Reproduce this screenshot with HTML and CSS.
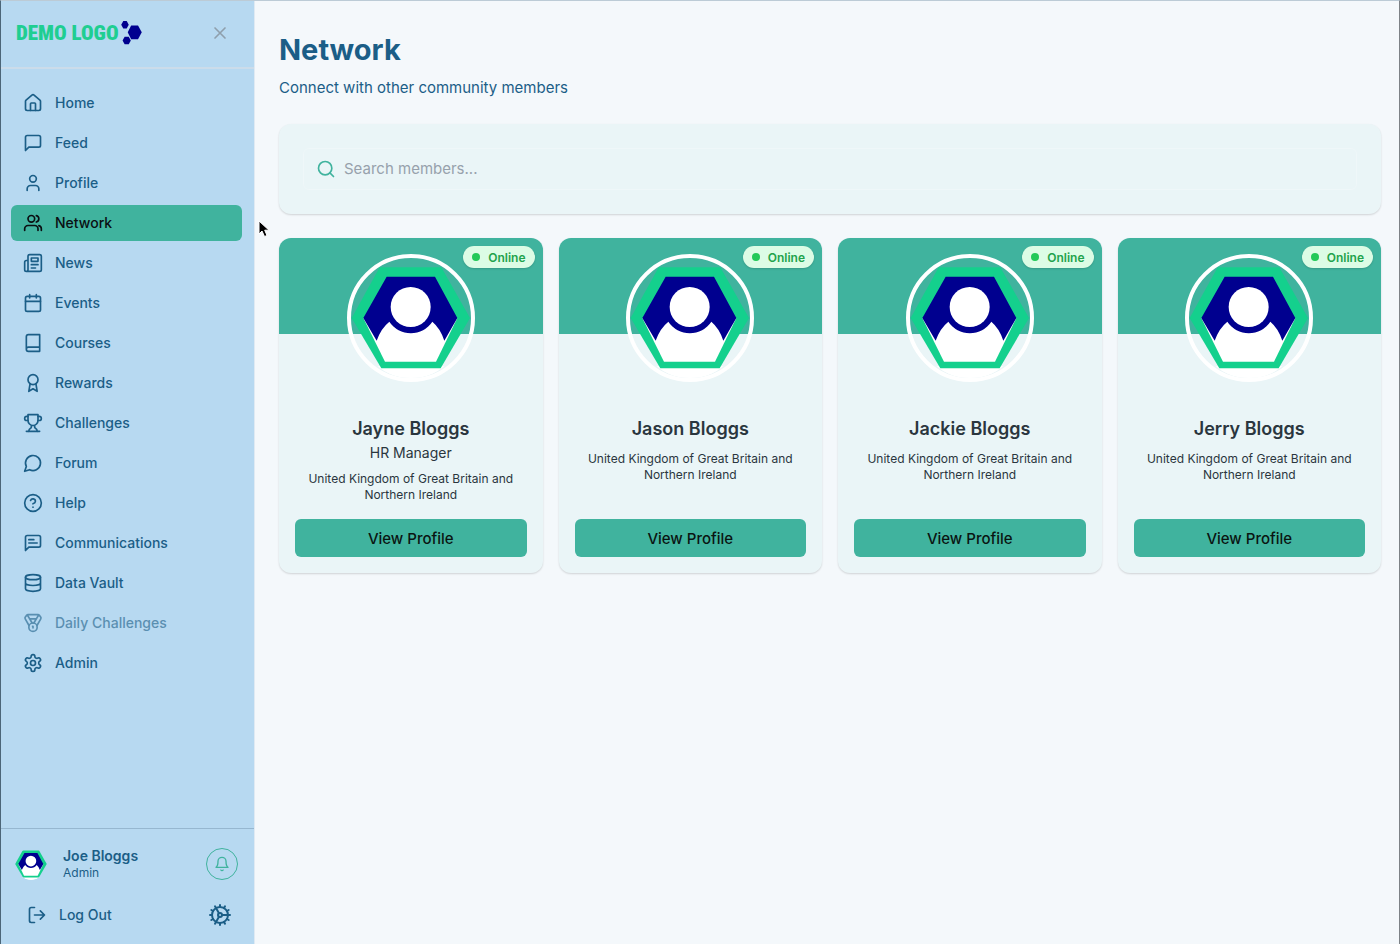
FILE: index.html
```html
<!DOCTYPE html>
<html lang="en">
<head>
  <meta charset="UTF-8">
  <meta name="viewport" content="width=device-width, initial-scale=1.0">
  <title>Network</title>
  <link rel="stylesheet" href="styles.css">
</head>
<body>
  <svg class="defs" aria-hidden="true">
    <symbol id="avatar" viewBox="0 0 360 360">
      <path fill="#fff" d="M80 325H280Q235 362 180 362T80 325z"/>
      <path fill="#14d08d" d="M86 28H271L357 180L269 331H91L2 180z"/>
      <path fill="#fff" d="M37 180H319L255 311H102z"/>
      <path fill="#00008f" d="M107 56H252L319 180L280 248Q268 211 244 191A77 77 0 0 1 115 191Q90 211 77 248L37 180z"/>
      <circle fill="#fff" cx="179" cy="147" r="60"/>
    </symbol>
  </svg>

  <div class="app">
    <aside class="sidebar">
      <div class="sidebar-header">
        <div class="logo">
          <span class="logo-text">DEMO LOGO</span>
          <svg class="logo-mark" viewBox="0 0 60 70" fill="#00008f">
            <path d="M6 0H16L22 11L16 22H6L0 11z"/>
            <path d="M29 13H49L60 33L49 53H29L19 33z"/>
            <path d="M10 46H22L28 57L22 68H10L4 57z"/>
          </svg>
        </div>
        <button class="close" aria-label="Close menu">
          <svg class="icon" viewBox="0 0 24 24"><path d="M18 6 6 18M6 6l12 12"/></svg>
        </button>
      </div>

      <nav class="nav">
        <a href="#"><svg class="icon" viewBox="0 0 24 24"><path d="M15 21v-8a1 1 0 0 0-1-1h-4a1 1 0 0 0-1 1v8"/><path d="M3 10a2 2 0 0 1 .7-1.5l7-6a2 2 0 0 1 2.6 0l7 6A2 2 0 0 1 21 10v9a2 2 0 0 1-2 2H5a2 2 0 0 1-2-2z"/></svg>Home</a>
        <a href="#"><svg class="icon" viewBox="0 0 24 24"><path d="M21 15a2 2 0 0 1-2 2H7l-4 4V5a2 2 0 0 1 2-2h14a2 2 0 0 1 2 2z"/></svg>Feed</a>
        <a href="#"><svg class="icon" viewBox="0 0 24 24"><path d="M19 21v-2a4 4 0 0 0-4-4H9a4 4 0 0 0-4 4v2"/><circle cx="12" cy="7" r="4"/></svg>Profile</a>
        <a href="#" class="active" aria-current="page"><svg class="icon" viewBox="0 0 24 24"><path d="M18 21v-2a4 4 0 0 0-4-4H6a4 4 0 0 0-4 4v2"/><circle cx="10" cy="7" r="4"/><path d="M22 21v-2a4 4 0 0 0-3-3.870M16 3.130a4 4 0 0 1 0 7.750"/></svg>Network</a>
        <a href="#"><svg class="icon" viewBox="0 0 24 24"><path d="M4 22h16a2 2 0 0 0 2-2V4a2 2 0 0 0-2-2H8a2 2 0 0 0-2 2v16a2 2 0 0 1-4 0v-9a2 2 0 0 1 2-2h2"/><path d="M18 14h-8M15 18h-5M10 6h8v4h-8z"/></svg>News</a>
        <a href="#"><svg class="icon" viewBox="0 0 24 24"><path d="M8 2v4M16 2v4M3 10h18"/><rect x="3" y="4" width="18" height="18" rx="2"/></svg>Events</a>
        <a href="#"><svg class="icon" viewBox="0 0 24 24"><path d="M4 19.500v-15A2.500 2.500 0 0 1 6.500 2H20v20H6.500a2.500 2.500 0 0 1 0-5H20"/></svg>Courses</a>
        <a href="#"><svg class="icon" viewBox="0 0 24 24"><circle cx="12" cy="8" r="6"/><path d="m8.500 12.900-1.500 9.100 5-3 5 3-1.500-9.100"/></svg>Rewards</a>
        <a href="#"><svg class="icon" viewBox="0 0 24 24"><path d="M6 9H4.500a2.500 2.500 0 0 1 0-5H6M18 9h1.500a2.500 2.500 0 0 0 0-5H18M4 22h16"/><path d="M10 14.660V17c0 .55-.47.980-.97 1.210C7.850 18.750 7 20.240 7 22M14 14.660V17c0 .55.470.980.970 1.210C16.150 18.750 17 20.240 17 22M18 2H6v7a6 6 0 0 0 12 0V2z"/></svg>Challenges</a>
        <a href="#"><svg class="icon" viewBox="0 0 24 24"><path d="M7.900 20A9 9 0 1 0 4 16.100L2 22z"/></svg>Forum</a>
        <a href="#"><svg class="icon" viewBox="0 0 24 24"><circle cx="12" cy="12" r="10"/><path d="M9.090 9a3 3 0 0 1 5.830 1c0 2-3 3-3 3M12 17h.01"/></svg>Help</a>
        <a href="#"><svg class="icon" viewBox="0 0 24 24"><path d="M21 15a2 2 0 0 1-2 2H7l-4 4V5a2 2 0 0 1 2-2h14a2 2 0 0 1 2 2zM13 8H7M17 12H7"/></svg>Communications</a>
        <a href="#"><svg class="icon" viewBox="0 0 24 24"><ellipse cx="12" cy="5" rx="9" ry="3"/><path d="M3 5v14a9 3 0 0 0 18 0V5M3 12a9 3 0 0 0 18 0"/></svg>Data Vault</a>
        <a href="#" class="muted"><svg class="icon" viewBox="0 0 24 24"><path d="M7.210 15 2.660 7.140a2 2 0 0 1 .130-2.200L4.400 2.800A2 2 0 0 1 6 2h12a2 2 0 0 1 1.600.800l1.600 2.140a2 2 0 0 1 .140 2.200L16.790 15M11 12 5.120 2.200M13 12l5.880-9.800M8 7h8"/><circle cx="12" cy="17" r="5"/><path d="M12 18v-2h-.5"/></svg>Daily Challenges</a>
        <a href="#"><svg class="icon" viewBox="0 0 24 24"><path d="M12.220 2h-.44a2 2 0 0 0-2 2v.18a2 2 0 0 1-1 1.730l-.43.250a2 2 0 0 1-2 0l-.15-.08a2 2 0 0 0-2.730.730l-.22.380a2 2 0 0 0 .730 2.730l.150.100a2 2 0 0 1 1 1.720v.510a2 2 0 0 1-1 1.740l-.15.090a2 2 0 0 0-.73 2.730l.220.380a2 2 0 0 0 2.730.730l.150-.08a2 2 0 0 1 2 0l.430.250a2 2 0 0 1 1 1.730V20a2 2 0 0 0 2 2h.440a2 2 0 0 0 2-2v-.18a2 2 0 0 1 1-1.730l.430-.25a2 2 0 0 1 2 0l.150.080a2 2 0 0 0 2.730-.73l.220-.39a2 2 0 0 0-.73-2.730l-.15-.08a2 2 0 0 1-1-1.740v-.5a2 2 0 0 1 1-1.740l.150-.09a2 2 0 0 0 .730-2.730l-.22-.38a2 2 0 0 0-2.730-.73l-.15.080a2 2 0 0 1-2 0l-.43-.25a2 2 0 0 1-1-1.730V4a2 2 0 0 0-2-2z"/><circle cx="12" cy="12" r="3"/></svg>Admin</a>
      </nav>

      <div class="sidebar-footer">
        <div class="user">
          <svg class="user-avatar" role="img" aria-label="Joe Bloggs"><use href="#avatar"/></svg>
          <div class="user-info">
            <div class="user-name">Joe Bloggs</div>
            <div class="user-role">Admin</div>
          </div>
          <button class="bell" aria-label="Notifications">
            <svg class="icon" viewBox="0 0 24 24"><path d="M6 8a6 6 0 0 1 12 0c0 7 3 9 3 9H3s3-2 3-9M10.300 21a1.940 1.940 0 0 0 3.400 0"/></svg>
          </button>
        </div>
        <div class="actions">
          <button class="logout">
            <svg class="icon" viewBox="0 0 24 24"><path d="M9 21H5a2 2 0 0 1-2-2V5a2 2 0 0 1 2-2h4M16 17l5-5-5-5M21 12H9"/></svg>Log Out
          </button>
          <button class="cog" aria-label="Settings">
            <svg class="icon" viewBox="0 0 24 24"><circle cx="12" cy="12" r="8"/><circle cx="12" cy="12" r="2"/><path d="M12 2v2M12 22v-2M17 20.660l-1-1.730M11 10.270 7 3.340M20.660 17l-1.730-1M3.340 7l1.730 1M14 12h8M2 12h2M20.660 7l-1.730 1M3.340 17l1.730-1M17 3.340l-1 1.730M11 13.730l-4 6.930"/></svg>
          </button>
        </div>
      </div>
    </aside>

    <main class="main">
      <h1>Network</h1>
      <p class="subtitle">Connect with other community members</p>

      <div class="search-card">
        <label class="search">
          <svg class="icon" viewBox="0 0 24 24"><circle cx="11" cy="11" r="8"/><path d="m21 21-4.300-4.300"/></svg>
          <input type="text" placeholder="Search members..." aria-label="Search members">
        </label>
      </div>

      <div class="members">
        <article class="member">
          <div class="banner"><span class="status">Online</span></div>
          <svg class="avatar" role="img" aria-label="Jayne Bloggs"><use href="#avatar"/></svg>
          <div class="member-body">
            <h2>Jayne Bloggs</h2>
            <p class="job">HR Manager</p>
            <p class="location">United Kingdom of Great Britain and Northern Ireland</p>
            <button class="view">View Profile</button>
          </div>
        </article>
        <article class="member">
          <div class="banner"><span class="status">Online</span></div>
          <svg class="avatar" role="img" aria-label="Jason Bloggs"><use href="#avatar"/></svg>
          <div class="member-body">
            <h2>Jason Bloggs</h2>
            <p class="location">United Kingdom of Great Britain and Northern Ireland</p>
            <button class="view">View Profile</button>
          </div>
        </article>
        <article class="member">
          <div class="banner"><span class="status">Online</span></div>
          <svg class="avatar" role="img" aria-label="Jackie Bloggs"><use href="#avatar"/></svg>
          <div class="member-body">
            <h2>Jackie Bloggs</h2>
            <p class="location">United Kingdom of Great Britain and Northern Ireland</p>
            <button class="view">View Profile</button>
          </div>
        </article>
        <article class="member">
          <div class="banner"><span class="status">Online</span></div>
          <svg class="avatar" role="img" aria-label="Jerry Bloggs"><use href="#avatar"/></svg>
          <div class="member-body">
            <h2>Jerry Bloggs</h2>
            <p class="location">United Kingdom of Great Britain and Northern Ireland</p>
            <button class="view">View Profile</button>
          </div>
        </article>
      </div>
    </main>
  </div>

  <svg class="cursor" viewBox="0 0 12 18" aria-hidden="true"><path d="M1 1v13l3-3 2.500 5.500 2.500-1-2.300-5.300H11z" fill="#000" stroke="#fff" stroke-width="1"/></svg>
</body>
</html>
```
FILE: styles.css
```css
* { box-sizing: border-box; }
body { margin: 0; font-family: Inter, "Liberation Sans", sans-serif; background: #f4f8fb; color: #1b5e87; }
h1, h2, p { margin: 0; }
button { font: inherit; color: inherit; background: none; border: 0; padding: 0; cursor: pointer; }
svg { display: block; flex: none; }
.defs { position: absolute; width: 0; height: 0; }

.icon { width: 20px; height: 20px; fill: none; stroke: currentColor; stroke-width: 2; stroke-linecap: round; stroke-linejoin: round; }

.app { display: flex; min-height: 100vh; border: 1px solid #bccbd6; border-left-color: #4c6678; border-right-color: #7d8286; border-bottom: 0; }

/* Sidebar */
.sidebar { width: 254px; flex: none; display: flex; flex-direction: column; background: #b7d9f1; border-right: 1px solid #dfeaf3; font-size: 14px; line-height: 20px; font-weight: 500; }
.sidebar-header { display: flex; align-items: center; justify-content: space-between; height: 68px; padding: 0 24px 2px 15px; border-bottom: 2px solid #cbdcea; }
.logo { display: flex; align-items: center; gap: 2px; }
.logo-text { font-family: "Roboto Condensed", "Open Sans Condensed", "Noto Sans CJK JP", sans-serif; font-size: 21px; line-height: 24px; font-weight: 900; color: #1fce92; white-space: nowrap; }
.logo-mark { width: 21px; height: 24px; }
.close { color: #8f9fac; }

.nav { flex: 1; display: flex; flex-direction: column; gap: 4px; padding: 16px 12px 16px 10px; }
.nav a { display: flex; align-items: center; gap: 12px; height: 36px; padding: 0 12px; border-radius: 6px; color: inherit; text-decoration: none; }
.nav a.active { background: #40b39e; color: #0a0f12; }
.nav a.muted { opacity: 0.6; }

.sidebar-footer { border-top: 1px solid #96b7d0; padding: 18px 16px 17px 14px; }
.user { display: flex; align-items: center; }
.user-avatar { width: 32px; height: 32px; border-radius: 50%; }
.user-info { flex: 1; padding-left: 16px; }
.user-name { font-weight: 600; line-height: 18px; }
.user-role { font-size: 12px; line-height: 16px; font-weight: 400; }
.bell { display: flex; align-items: center; justify-content: center; width: 32px; height: 32px; border: 1px solid #40b39e; border-radius: 50%; color: #40b39e; }
.bell .icon { width: 16px; height: 16px; }
.actions { display: flex; align-items: center; justify-content: space-between; padding: 22px 6px 0 12px; }
.logout { display: flex; align-items: center; gap: 12px; }
.cog .icon { width: 24px; height: 24px; }

/* Page */
.main { flex: 1; min-width: 0; padding: 31px 18px 24px 24px; }
h1 { font-size: 29px; line-height: 36px; font-weight: 700; }
.subtitle { margin-top: 8px; font-size: 15px; line-height: 24px; }

.search-card { margin-top: 24px; padding: 24px; background: #eaf5f7; border-radius: 12px; box-shadow: 0 1px 2px #00000026; }
.search { display: flex; align-items: center; gap: 8px; height: 42px; padding: 0 12px; border: 1px solid #eff7f9; border-radius: 6px; color: #40b39e; }
.search input { flex: 1; min-width: 0; border: 0; padding: 0; outline: none; background: none; font: inherit; font-size: 15px; line-height: 24px; color: #2d3b45; }
.search input::placeholder { color: #97a1ac; opacity: 1; }

.members { display: grid; grid-template-columns: repeat(4, 1fr); gap: 16px; margin-top: 24px; }
.member { position: relative; display: flex; flex-direction: column; background: #eaf5f7; border-radius: 12px; box-shadow: 0 1px 2px #00000026; color: #2a363e; text-align: center; }
.banner { height: 96px; background: #40b39e; border-radius: 12px 12px 0 0; }
.status { position: absolute; top: 8px; right: 8px; display: flex; align-items: center; gap: 8px; height: 22px; padding: 0 9px; border-radius: 11px; background: #dcfce5; color: #22a34c; font-size: 12px; font-weight: 600; box-shadow: 0 1px 2px #00000026; }
.status::before { content: ""; width: 8px; height: 8px; border-radius: 50%; background: #22c958; }
.avatar { position: absolute; top: 16px; left: 50%; margin-left: -64px; width: 128px; height: 128px; border: 4px solid #fff; border-radius: 50%; }
.member-body { flex: 1; display: flex; flex-direction: column; padding: 81px 16px 16px; }
h2 { font-size: 18px; line-height: 28px; font-weight: 600; }
.job { font-size: 14px; line-height: 20px; }
.location { margin: 8px 0 16px; padding: 0 8px; font-size: 12px; line-height: 16px; }
.view { margin-top: auto; height: 38px; background: #40b39e; border-radius: 6px; font-size: 15px; font-weight: 500; color: #0a1512; }

.cursor { position: absolute; left: 258px; top: 220px; width: 12px; height: 18px; }
```
